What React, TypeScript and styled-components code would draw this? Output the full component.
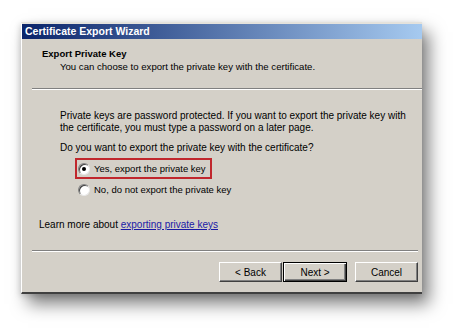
import React from "react";
import styled, { createGlobalStyle } from "styled-components";

const Global = createGlobalStyle`
  body {
    margin: 0;
    background: #fff;
    font-family: "Liberation Sans", Arial, sans-serif;
  }
`;

const Page = styled.div`
  padding: 22px 0 0 21px;
  height: 312px;
`;

const Dialog = styled.div`
  width: 400px;
  background: #d4d0c8;
  border-top: 2px solid #e4e2dc;
  border-left: 1px solid #ffffff;
  border-bottom: 2px solid #404040;
  box-shadow: 7px 10px 16px rgba(0, 0, 0, 0.5), -1px 2px 6px rgba(0, 0, 0, 0.15);
  display: flex;
  flex-direction: column;
`;

const TitleBar = styled.div`
  height: 15px;
  background: linear-gradient(to right, #0a246a, #a6caf0);
  color: #fff;
  font-weight: bold;
  font-size: 10.5px;
  line-height: 15px;
  padding-left: 3px;
`;

const Header = styled.div`
  padding: 9px 0 0 20px;
  height: 40px;
`;

const HeaderTitle = styled.div`
  font-weight: bold;
  font-size: 9.5px;
  line-height: 12px;
  color: #000;
`;

const HeaderText = styled.div`
  font-size: 9.6px;
  line-height: 14px;
  padding-left: 18px;
  color: #000;
`;

const Separator = styled.div<{ $right: number }>`
  height: 0;
  border-top: 1px solid #808080;
  border-bottom: 1px solid #ffffff;
  margin-left: 10px;
  margin-right: ${(p) => p.$right}px;
`;

const Body = styled.div`
  padding: 20px 0 0 38px;
  height: 140px;
  font-size: 10px;
  color: #000;
`;

const Para = styled.p`
  margin: 0;
  line-height: 11.5px;
  width: 360px;
`;

const Question = styled.p`
  margin: 9px 0 0;
  line-height: 12px;
`;

const Options = styled.div`
  margin: 4px 0 0 15px;
  display: flex;
  flex-direction: column;
  align-items: flex-start;
  font-size: 9.5px;
`;

const Option = styled.label<{ $highlight?: boolean }>`
  display: flex;
  align-items: center;
  gap: 4px;
  height: 17px;
  padding: 0 4px 0 1px;
  border: 2px solid ${(p) => (p.$highlight ? "#c0272d" : "transparent")};
  white-space: nowrap;
`;

const Radio = styled.span<{ $checked?: boolean }>`
  flex-shrink: 0;
  box-sizing: border-box;
  width: 12px;
  height: 12px;
  border-radius: 50%;
  background: #fff;
  border: 1px solid #808080;
  border-right-color: #e8e8e8;
  border-bottom-color: #e8e8e8;
  box-shadow: inset 1px 1px 0 #404040;
  display: flex;
  align-items: center;
  justify-content: center;
  &::after {
    content: "";
    width: 4px;
    height: 4px;
    border-radius: 50%;
    background: ${(p) => (p.$checked ? "#000" : "transparent")};
  }
`;

const Learn = styled.div`
  margin: 19px 0 0 -21px;
  line-height: 12px;
`;

const Link = styled.a`
  color: #1a1aa6;
  text-decoration: underline;
`;

const Footer = styled.div`
  display: flex;
  justify-content: flex-end;
  padding: 10px 4px 10px 0;
`;

const Button = styled.button<{ $default?: boolean; $gap?: number }>`
  width: ${(p) => (p.$default ? 64 : 63)}px;
  height: 20px;
  margin-left: ${(p) => p.$gap ?? 0}px;
  background: #d4d0c8;
  font-family: "Liberation Sans", Arial, sans-serif;
  font-size: 10px;
  color: #000;
  padding: 0;
  border: 1px solid;
  border-color: #ffffff #404040 #404040 #ffffff;
  box-shadow: inset -1px -1px 0 #808080;
  ${(p) =>
    p.$default &&
    `
    border: 1px solid #000;
    box-shadow: inset 1px 1px 0 #fff, inset -1px -1px 0 #404040, inset -2px -2px 0 #808080;
  `}
`;

const App: React.FC = () => {
  return (
    <Page>
      <Global />
      <Dialog>
        <TitleBar>Certificate Export Wizard</TitleBar>
        <Header>
          <HeaderTitle>Export Private Key</HeaderTitle>
          <HeaderText>You can choose to export the private key with the certificate.</HeaderText>
        </Header>
        <Separator $right={0} />
        <Body>
          <Para>
            Private keys are password protected. If you want to export the private key with the
            certificate, you must type a password on a later page.
          </Para>
          <Question>Do you want to export the private key with the certificate?</Question>
          <Options>
            <Option $highlight>
              <Radio $checked />
              Yes, export the private key
            </Option>
            <Option>
              <Radio />
              No, do not export the private key
            </Option>
          </Options>
          <Learn>
            Learn more about <Link href="#">exporting private keys</Link>
          </Learn>
        </Body>
        <Separator $right={4} />
        <Footer>
          <Button>&lt; Back</Button>
          <Button $default $gap={1}>Next &gt;</Button>
          <Button $gap={8}>Cancel</Button>
        </Footer>
      </Dialog>
    </Page>
  );
};

export default App;
